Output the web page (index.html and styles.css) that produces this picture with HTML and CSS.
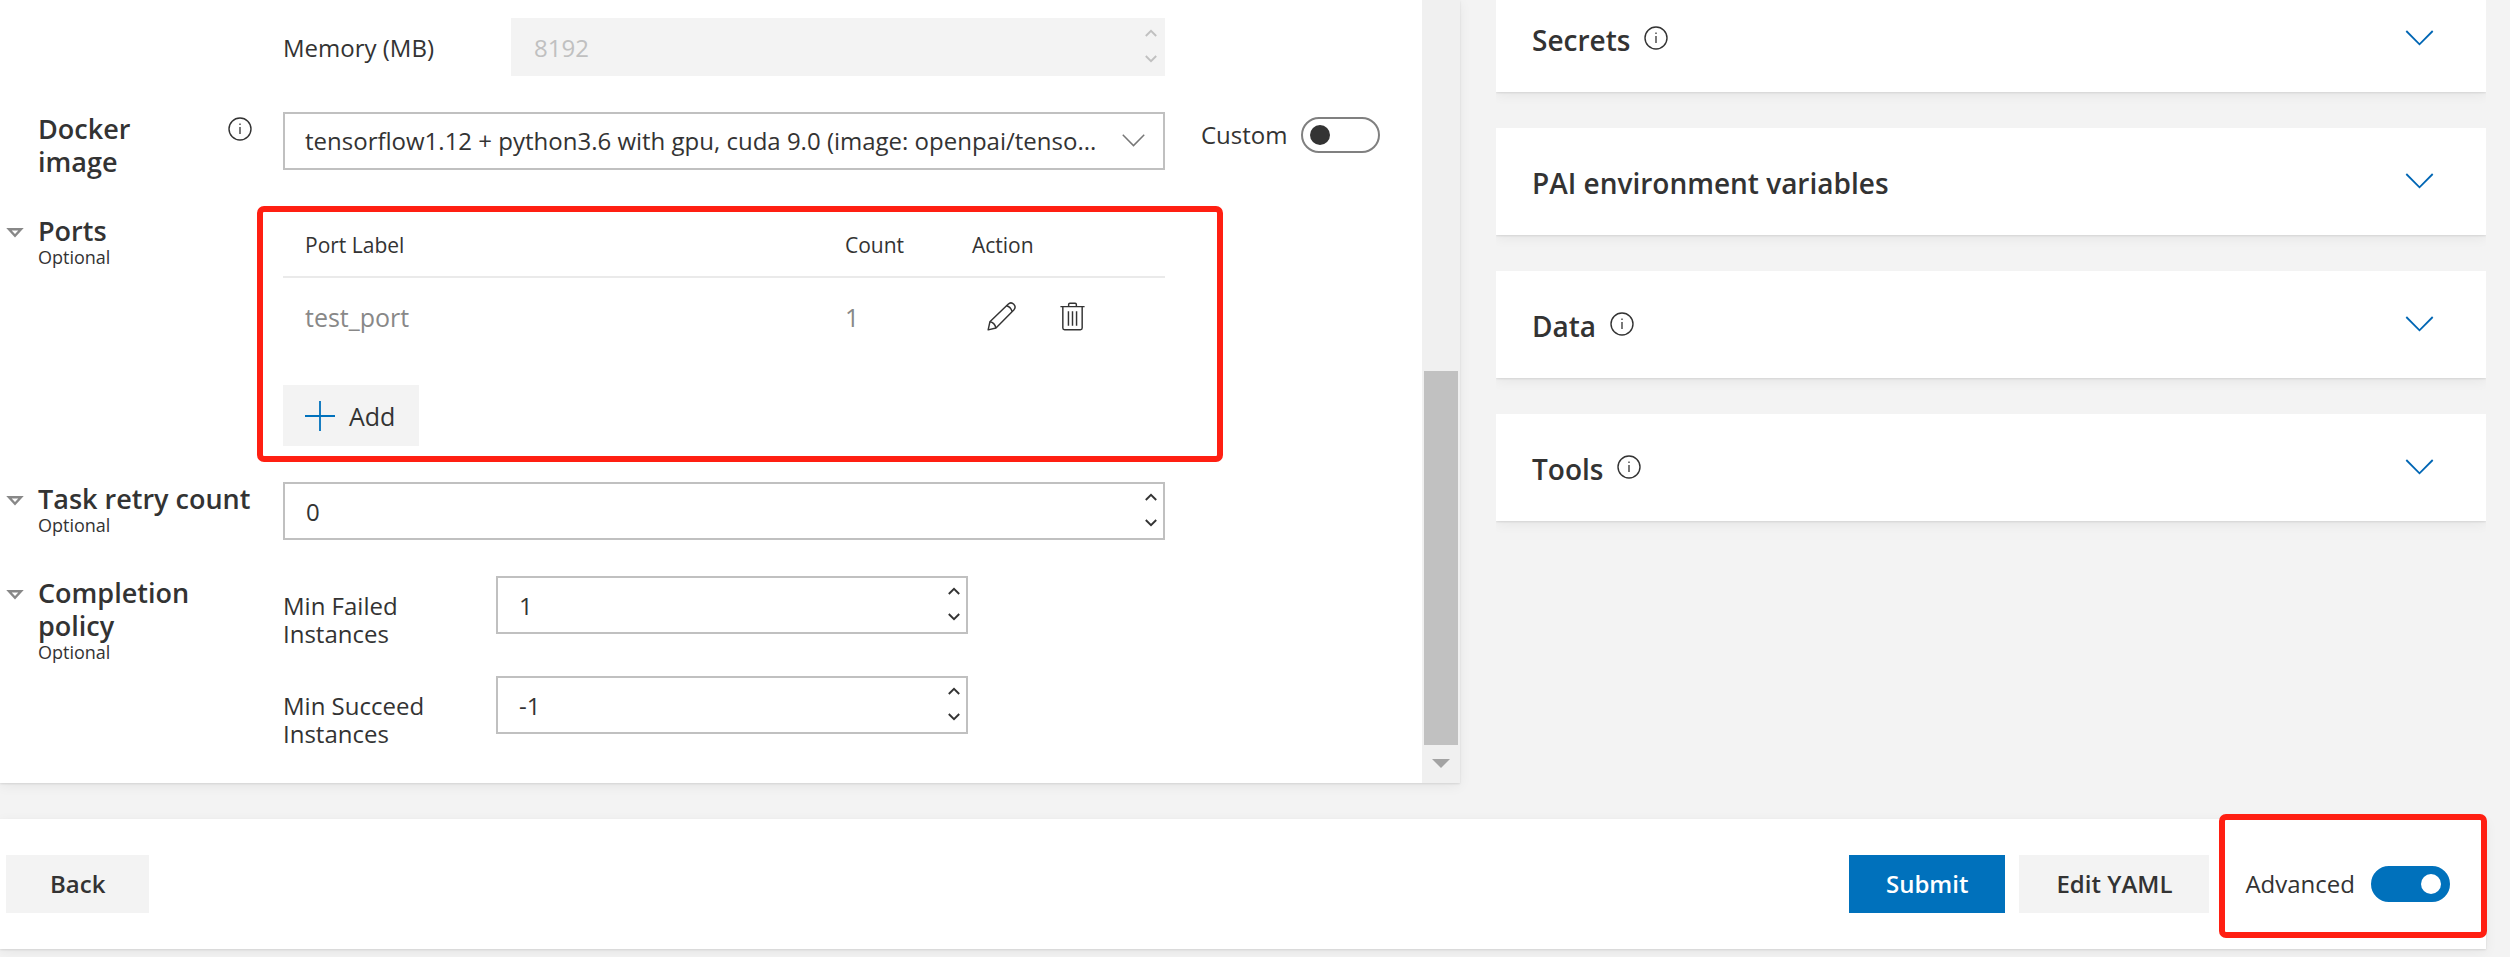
FILE: index.html
```html
<!DOCTYPE html>
<html lang="en">
<head>
<meta charset="utf-8">
<meta name="viewport" content="width=device-width, initial-scale=1">
<title>Job submission</title>
<link rel="stylesheet" href="styles.css">
</head>
<body>
<svg class="defs" aria-hidden="true">
  <symbol id="info" viewBox="0 0 24 24"><circle cx="12" cy="12" r="11" fill="none" stroke="currentColor" stroke-width="1.4"/><path d="M12 10v7M12 6.500v1.600" stroke="currentColor" stroke-width="1.300"/></symbol>
  <symbol id="chevron" viewBox="0 0 28 16"><path d="M.8 1 14 14.300 27.200 1" fill="none" stroke="currentColor" stroke-width="1.800"/></symbol>
  <symbol id="up" viewBox="0 0 12 8"><path d="M.8 7 6 1.800 11.200 7" fill="none" stroke="currentColor" stroke-width="1.900"/></symbol>
  <symbol id="down" viewBox="0 0 12 8"><path d="M.8 1 6 6.200 11.200 1" fill="none" stroke="currentColor" stroke-width="1.900"/></symbol>
  <symbol id="caret" viewBox="0 0 18 10"><path d="M3 1.300h12L9 7.800z" fill="none" stroke="currentColor" stroke-width="2.400"/></symbol>
</svg>

<main class="workspace">
  <section class="card form-card">
    <form class="form">
      <div class="row">
        <div class="heading"></div>
        <div class="field resource">
          <label class="sub-label" for="memory">Memory (MB)</label>
          <div class="spin spin-disabled">
            <input id="memory" type="number" value="8192" disabled>
            <div class="steps">
              <button type="button" aria-label="Increase" disabled><svg><use href="#up"/></svg></button>
              <button type="button" aria-label="Decrease" disabled><svg><use href="#down"/></svg></button>
            </div>
          </div>
        </div>
        <div class="aside"></div>
      </div>

      <div class="row">
        <div class="heading heading-info">
          <label class="title" for="image">Docker image</label>
          <svg class="info"><use href="#info"/></svg>
        </div>
        <div class="field dropdown">
          <select id="image"><option>tensorflow1.12 + python3.6 with gpu, cuda 9.0 (image: openpai/tenso...</option></select>
          <svg class="dropdown-arrow"><use href="#chevron"/></svg>
        </div>
        <div class="aside">
          <label for="custom">Custom</label>
          <input class="toggle" id="custom" type="checkbox">
        </div>
      </div>

      <div class="row row-ports">
        <div class="heading">
          <svg class="caret"><use href="#caret"/></svg>
          <div class="title">Ports</div>
          <div class="optional">Optional</div>
        </div>
        <div class="field ports">
          <table>
            <thead><tr><th class="col-label">Port Label</th><th class="col-count">Count</th><th>Action</th></tr></thead>
            <tbody><tr>
              <td>test_port</td><td>1</td>
              <td><div class="actions">
                <button type="button" aria-label="Edit"><svg viewBox="0 0 30 30"><g fill="none" stroke="currentColor" stroke-width="1.500" stroke-linejoin="round"><path d="M1.200 28.800 3 20.500 21.800 2.300C23.500.700 26 .7 27.700 2.300 29.300 4 29.300 6.500 27.700 8.200L9.300 26.900z"/><path d="M20.200 3.900C22.500 4.500 25 6.800 26 9.800M3 20.500C6 21 8.500 24 9.300 26.900"/></g></svg></button>
                <button type="button" aria-label="Delete"><svg viewBox="0 0 30 30"><g fill="none" stroke="currentColor" stroke-width="1.500"><path d="M2.500 4.800h25M5 4.800V27q0 1.800 1.800 1.800h16.400Q25 28.800 25 27V4.800M11 4.800V2.500Q11 1.200 12.300 1.200h5.400Q19 1.200 19 2.500v2.300M10.800 9.500v15M15 9.500v15M19.200 9.500v15"/></g></svg></button>
              </div></td>
            </tr></tbody>
          </table>
          <button class="add" type="button"><svg viewBox="0 0 30 30"><path d="M15 0v30M0 15h30" stroke="currentColor" stroke-width="1.800"/></svg>Add</button>
          <div class="highlight highlight-ports"></div>
        </div>
        <div class="aside"></div>
      </div>

      <div class="row">
        <div class="heading">
          <svg class="caret"><use href="#caret"/></svg>
          <label class="title" for="retry">Task retry count</label>
          <div class="optional">Optional</div>
        </div>
        <div class="field">
          <div class="spin">
            <input id="retry" type="number" value="0">
            <div class="steps">
              <button type="button" aria-label="Increase"><svg><use href="#up"/></svg></button>
              <button type="button" aria-label="Decrease"><svg><use href="#down"/></svg></button>
            </div>
          </div>
        </div>
        <div class="aside"></div>
      </div>

      <div class="row">
        <div class="heading">
          <svg class="caret"><use href="#caret"/></svg>
          <div class="title">Completion policy</div>
          <div class="optional">Optional</div>
        </div>
        <div class="field policies">
          <div class="policy">
            <label class="sub-label" for="failed">Min Failed Instances</label>
            <div class="spin">
              <input id="failed" type="number" value="1">
              <div class="steps">
                <button type="button" aria-label="Increase"><svg><use href="#up"/></svg></button>
                <button type="button" aria-label="Decrease"><svg><use href="#down"/></svg></button>
              </div>
            </div>
          </div>
          <div class="policy">
            <label class="sub-label" for="succeed">Min Succeed Instances</label>
            <div class="spin">
              <input id="succeed" type="number" value="-1">
              <div class="steps">
                <button type="button" aria-label="Increase"><svg><use href="#up"/></svg></button>
                <button type="button" aria-label="Decrease"><svg><use href="#down"/></svg></button>
              </div>
            </div>
          </div>
        </div>
        <div class="aside"></div>
      </div>
    </form>
    <div class="scrollbar">
      <div class="thumb"></div>
      <svg class="scroll-down" viewBox="0 0 18 9"><path d="M0 0h18L9 9z" fill="currentColor"/></svg>
    </div>
  </section>

  <aside class="panels">
    <section class="card panel"><h2>Secrets</h2><svg class="info"><use href="#info"/></svg><button type="button" aria-label="Expand Secrets"><svg><use href="#chevron"/></svg></button></section>
    <section class="card panel"><h2>PAI environment variables</h2><button type="button" aria-label="Expand PAI environment variables"><svg><use href="#chevron"/></svg></button></section>
    <section class="card panel"><h2>Data</h2><svg class="info"><use href="#info"/></svg><button type="button" aria-label="Expand Data"><svg><use href="#chevron"/></svg></button></section>
    <section class="card panel"><h2>Tools</h2><svg class="info"><use href="#info"/></svg><button type="button" aria-label="Expand Tools"><svg><use href="#chevron"/></svg></button></section>
  </aside>
</main>

<footer class="card footer">
  <button class="btn btn-back" type="button">Back</button>
  <div class="footer-actions">
    <button class="btn btn-primary" type="button">Submit</button>
    <button class="btn" type="button">Edit YAML</button>
    <div class="advanced">
      <label for="advanced">Advanced</label>
      <input class="toggle" id="advanced" type="checkbox" checked>
      <div class="highlight highlight-advanced"></div>
    </div>
  </div>
</footer>
</body>
</html>
```
FILE: styles.css
```css
* { box-sizing: border-box; }

body {
  margin: 0;
  padding-right: 24px;
  background: #f3f3f3;
  color: #333;
  font: 24px/28px "Open Sans", "Noto Sans", sans-serif;
}

button, input, select {
  margin: 0;
  padding: 0;
  border: 0;
  background: none;
  color: inherit;
  font: inherit;
}

svg { display: block; flex: none; }
.defs { position: absolute; width: 0; height: 0; }

.card {
  background: #fff;
  box-shadow: 0 3px 12px rgba(0, 0, 0, .06), 0 1px 2px rgba(0, 0, 0, .1);
}

.workspace {
  display: grid;
  grid-template-columns: minmax(0, 1460fr) minmax(0, 990fr);
  column-gap: 36px;
  align-items: start;
}

/* Form */
.form-card { display: flex; }
.form {
  flex: 1;
  min-width: 0;
  display: flex;
  flex-direction: column;
  gap: 36px;
  padding: 18px 0 49px;
}
.row { display: flex; align-items: flex-start; }
.row-ports { margin-top: 8px; }

.heading {
  position: relative;
  width: 283px;
  flex: none;
  padding: 0 31px 0 38px;
  margin-bottom: -16px;
}
.heading-info { display: flex; justify-content: space-between; }
.heading-info .info { margin-top: 5px; }
.title { display: block; font-size: 27px; line-height: 33px; font-weight: 600; }
.heading-info .title { width: 120px; }
.optional { font-size: 18px; line-height: 20px; }
.caret { position: absolute; left: 6px; top: 14px; width: 18px; height: 10px; color: #888; }
.info { width: 24px; height: 24px; }

.field { flex: 1; min-width: 0; }
.aside {
  width: 257px;
  flex: none;
  display: flex;
  align-items: center;
  justify-content: space-between;
  padding: 5px 42px 0 36px;
}

.resource { display: flex; align-items: center; }
.resource .sub-label { width: 228px; flex: none; padding-top: 2px; }
.resource .spin { flex: 1; }

.spin {
  display: flex;
  min-width: 0;
  height: 58px;
  border: 2px solid #c0c0c0;
}
.spin input {
  flex: 1;
  min-width: 0;
  padding: 2px 0 0 21px;
  appearance: textfield;
}
.spin input::-webkit-inner-spin-button { appearance: none; margin: 0; }
.steps { display: flex; flex-direction: column; width: 24px; padding-bottom: 2px; }
.steps button { flex: 1; display: flex; align-items: center; justify-content: center; }
.steps svg { width: 12px; height: 8px; }
.spin-disabled { background: #f3f3f3; border-color: #f3f3f3; color: #c0c0c0; }

.dropdown { position: relative; }
.dropdown select {
  display: block;
  width: 100%;
  height: 58px;
  padding: 0 60px 0 20px;
  border: 2px solid #c0c0c0;
  line-height: 36px;
  appearance: none;
  text-overflow: ellipsis;
}
.dropdown-arrow {
  position: absolute;
  right: 20px;
  top: 22px;
  width: 23px;
  height: 13px;
  color: #777;
  pointer-events: none;
}

.toggle {
  appearance: none;
  flex: none;
  display: flex;
  align-items: center;
  width: 79px;
  height: 36px;
  padding: 0 7px;
  border: 2px solid #808080;
  border-radius: 18px;
}
.toggle::before { content: ""; width: 20px; height: 20px; border-radius: 50%; background: #333; }
.toggle:checked { justify-content: flex-end; background: #0071bc; border-color: #0071bc; }
.toggle:checked::before { background: #fff; }

/* Ports */
.ports { position: relative; }
table { width: 100%; border-collapse: collapse; table-layout: fixed; text-align: left; }
th { height: 63px; padding: 0 0 0 22px; border-bottom: 2px solid #eaeaea; font-size: 21px; font-weight: 400; }
td { height: 82px; padding: 0 0 4px 22px; color: #888; font-size: 25px; }
.col-label { width: 540px; }
.col-count { width: 127px; }
.actions { display: flex; gap: 42px; padding-left: 15px; color: #333; }
.actions svg { width: 29px; height: 29px; }
.add {
  display: flex;
  align-items: center;
  gap: 14px;
  height: 61px;
  margin-top: 26px;
  padding: 0 24px 0 22px;
  background: #f3f3f3;
  font-size: 25px;
}
.add svg { width: 30px; height: 30px; color: #0071bc; }

.highlight { position: absolute; border: 6px solid #ff1f12; border-radius: 7px; pointer-events: none; }
.highlight-ports { inset: -8px -58px -16px -26px; }
.highlight-advanced { inset: -52px -37px -36px -26px; }

/* Completion policy */
.policies { display: flex; flex-direction: column; gap: 42px; }
.policy { display: flex; height: 58px; }
.policy .sub-label { width: 213px; flex: none; padding: 16px 60px 0 0; }
.policy .spin { flex: 0 1 472px; }

/* Scrollbar */
.scrollbar {
  display: flex;
  flex-direction: column;
  justify-content: flex-end;
  align-items: center;
  gap: 14px;
  width: 38px;
  padding: 0 2px 15px;
  background: #f0f0f0;
}
.thumb { width: 100%; height: 374px; background: #c1c1c1; }
.scroll-down { width: 18px; height: 9px; color: #a3a3a3; }

/* Collapsed panels */
.panels { display: flex; flex-direction: column; gap: 36px; margin-top: -15px; }
.panel {
  display: flex;
  align-items: center;
  gap: 14px;
  height: 107px;
  padding: 2px 52px 0 36px;
  clip-path: inset(0 0 -20px 0);
}
.panel h2 { margin: 0; font-size: 28px; line-height: 34px; font-weight: 600; }
.panel .info { margin-bottom: 4px; }
.panel button { margin-left: auto; padding-bottom: 4px; color: #0066b4; }
.panel button svg { width: 29px; height: 16px; }

/* Footer */
.footer {
  display: flex;
  align-items: center;
  justify-content: space-between;
  height: 130px;
  margin: 36px 0 8px;
  padding: 0 36px 0 6px;
}
.footer-actions { display: flex; align-items: center; gap: 14px; }
.btn { height: 58px; padding: 0 37px; background: #f3f3f3; font-weight: 600; }
.btn-back { padding: 0 44px; }
.btn-primary { background: #0071bc; color: #fff; }
.advanced { position: relative; display: flex; align-items: center; gap: 16px; margin-left: 22px; }
```
